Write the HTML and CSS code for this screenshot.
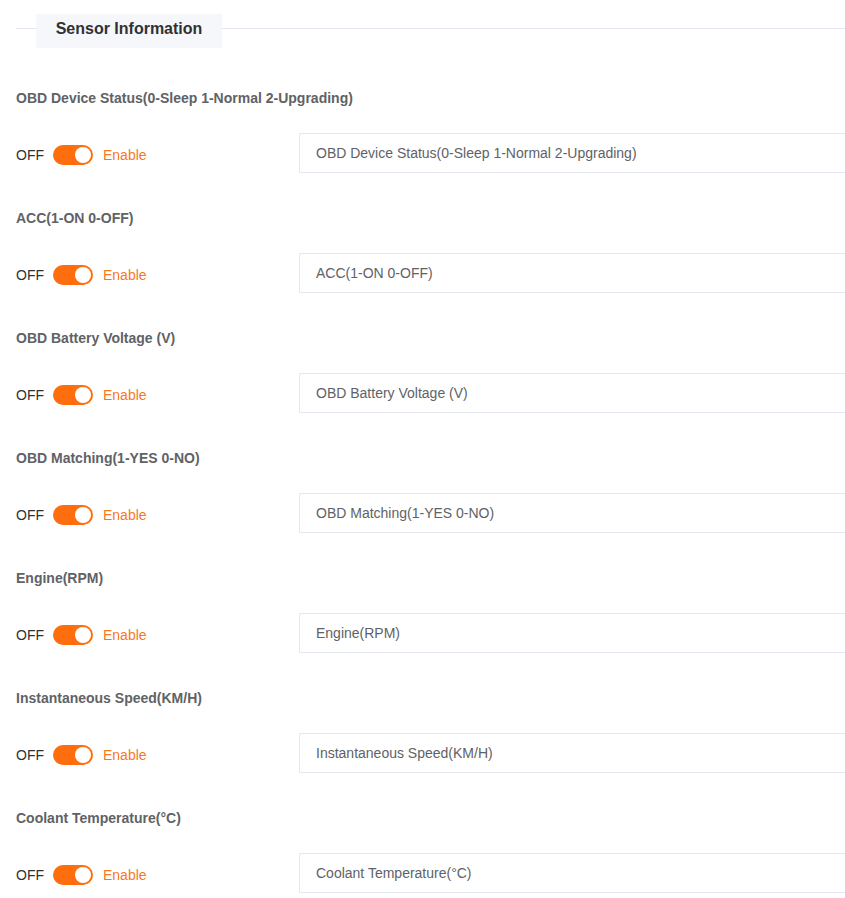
FILE: index.html
```html
<!DOCTYPE html>
<html>
<head>
<meta charset="utf-8">
<link rel="stylesheet" href="styles.css">
</head>
<body>
<div class="page">
  <div class="section-head">
    <div class="section-title">Sensor Information</div>
  </div>
  <div class="items">
    <div class="item">
      <div class="label">OBD Device Status(0-Sleep 1-Normal 2-Upgrading)</div>
      <div class="row">
        <div class="sw-group"><span class="off">OFF</span><span class="switch"><span class="knob"></span></span><span class="on">Enable</span></div>
        <div class="input">OBD Device Status(0-Sleep 1-Normal 2-Upgrading)</div>
      </div>
    </div>
    <div class="item">
      <div class="label">ACC(1-ON 0-OFF)</div>
      <div class="row">
        <div class="sw-group"><span class="off">OFF</span><span class="switch"><span class="knob"></span></span><span class="on">Enable</span></div>
        <div class="input">ACC(1-ON 0-OFF)</div>
      </div>
    </div>
    <div class="item">
      <div class="label">OBD Battery Voltage (V)</div>
      <div class="row">
        <div class="sw-group"><span class="off">OFF</span><span class="switch"><span class="knob"></span></span><span class="on">Enable</span></div>
        <div class="input">OBD Battery Voltage (V)</div>
      </div>
    </div>
    <div class="item">
      <div class="label">OBD Matching(1-YES 0-NO)</div>
      <div class="row">
        <div class="sw-group"><span class="off">OFF</span><span class="switch"><span class="knob"></span></span><span class="on">Enable</span></div>
        <div class="input">OBD Matching(1-YES 0-NO)</div>
      </div>
    </div>
    <div class="item">
      <div class="label">Engine(RPM)</div>
      <div class="row">
        <div class="sw-group"><span class="off">OFF</span><span class="switch"><span class="knob"></span></span><span class="on">Enable</span></div>
        <div class="input">Engine(RPM)</div>
      </div>
    </div>
    <div class="item">
      <div class="label">Instantaneous Speed(KM/H)</div>
      <div class="row">
        <div class="sw-group"><span class="off">OFF</span><span class="switch"><span class="knob"></span></span><span class="on">Enable</span></div>
        <div class="input">Instantaneous Speed(KM/H)</div>
      </div>
    </div>
    <div class="item">
      <div class="label">Coolant Temperature(°C)</div>
      <div class="row">
        <div class="sw-group"><span class="off">OFF</span><span class="switch"><span class="knob"></span></span><span class="on">Enable</span></div>
        <div class="input">Coolant Temperature(°C)</div>
      </div>
    </div>
  </div>
</div>
</body>
</html>
```
FILE: styles.css
```css
html, body {
  margin: 0;
  padding: 0;
  background: #fff;
  overflow: hidden;
}
body {
  font-family: "Liberation Sans", Arial, sans-serif;
  width: 845px;
  height: 898px;
}
.page {
  padding: 14px 0 0 16px;
  width: 845px;
  box-sizing: border-box;
}
.section-head {
  position: relative;
  height: 34px;
  display: flex;
  align-items: center;
}
.section-head::before {
  content: "";
  position: absolute;
  left: 0;
  right: 0;
  top: 14px;
  height: 1px;
  background: #e4e7ed;
}
.section-title {
  position: relative;
  margin-left: 20px;
  width: 186px;
  height: 34px;
  box-sizing: border-box;
  background: #f5f7fa;
  font-size: 16px;
  font-weight: bold;
  color: #303133;
  line-height: 30px;
  text-align: center;
}
.items {
  padding-top: 40px;
}
.item {
  height: 120px;
}
.label {
  height: 20px;
  line-height: 20px;
  font-size: 14px;
  font-weight: bold;
  color: #606266;
  margin-bottom: 25px;
}
.row {
  display: flex;
  align-items: center;
  height: 40px;
}
.sw-group {
  display: flex;
  align-items: center;
  width: 283px;
  font-size: 14px;
  margin-top: 4px;
  flex: none;
}
.off {
  color: #303133;
  margin-right: 9px;
}
.switch {
  position: relative;
  width: 40px;
  height: 20px;
  border-radius: 10px;
  background: #ff6e0e;
}
.knob {
  position: absolute;
  top: 2px;
  right: 2px;
  width: 16px;
  height: 16px;
  border-radius: 50%;
  background: #fff;
}
.on {
  color: #f7791f;
  margin-left: 10px;
}
.input {
  flex: 1;
  height: 40px;
  box-sizing: border-box;
  border: 1px solid #e4e7ed;
  border-right: none;
  border-radius: 2px 0 0 2px;
  padding-left: 16px;
  line-height: 38px;
  font-size: 14px;
  color: #606266;
}
```
